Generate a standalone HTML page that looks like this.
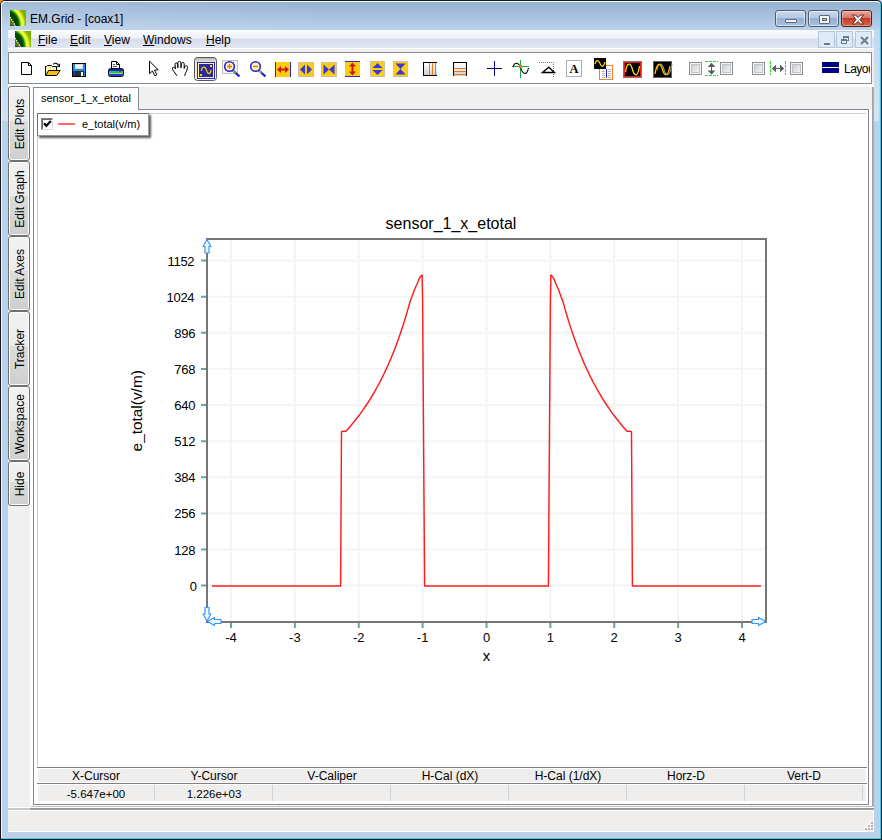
<!DOCTYPE html>
<html><head><meta charset="utf-8"><title>EM.Grid - [coax1]</title>
<style>
*{box-sizing:border-box;margin:0;padding:0}
html,body{width:882px;height:840px;overflow:hidden;background:#000}
body{font-family:"Liberation Sans",sans-serif;font-size:12px;color:#000;position:relative}
.abs{position:absolute}
#win{position:absolute;left:0;top:0;width:882px;height:840px;background:#16181c;overflow:hidden}
#frame{position:absolute;left:0;top:0;width:882px;height:840px;border-radius:5px 5px 0 0;
 background:linear-gradient(180deg,#96b2d1 2px,#a6c0dd 15px,#b9d1ea 30px,#b9d1ea 100%)}
#titlehl{position:absolute;left:2px;top:2px;width:330px;height:28px;background:linear-gradient(90deg,rgba(255,255,255,.12),rgba(255,255,255,0))}
#client{position:absolute;left:8px;top:30px;width:866px;height:802px;background:#f0f0f0}
#title{position:absolute;left:30px;top:11px;font-size:12px;line-height:16px;white-space:nowrap}
#menubar{position:absolute;left:0;top:0;width:866px;height:18px;background:linear-gradient(180deg,#fcfcfe 0,#eef0f8 8px,#d9dcee 9px,#e2e5f2 18px)}
.mi{position:absolute;top:3px;line-height:15px;font-size:12px;white-space:nowrap}
.mi u{text-decoration:underline;text-underline-offset:1px}

.cb{position:absolute;top:10px;height:17px;border:1px solid #4f5d72;border-radius:3px;background:linear-gradient(180deg,#c9d9ed 0,#b5c9e3 45%,#94afd0 50%,#a9c1de 100%);box-shadow:inset 0 0 0 1px rgba(255,255,255,.55)}
.cb i{position:absolute;display:block}
.cb.cl{border-color:#5c1a16;background:linear-gradient(180deg,#e8a89a 0,#d8776a 45%,#c13c28 50%,#d1694a 100%);box-shadow:inset 0 0 0 1px rgba(255,255,255,.35)}

.mb{position:absolute;top:1px;width:17px;height:17px;border:1px solid #b4c6dc;background:#ddeaf8}
.mb i{position:absolute;display:block}
.sb{position:absolute;left:0;width:22px;border:1px solid #707070;border-radius:3px;background:linear-gradient(180deg,#f2f2f2 0,#ebebeb 46%,#dddddd 46%,#cfcfcf 100%);box-shadow:inset 0 0 0 1px #fcfcfc}
.sb span{position:absolute;left:50%;top:50%;transform:translate(-50%,-50%) rotate(-90deg) translateY(1px);white-space:nowrap;font-size:12px;line-height:16px}

.hc{text-align:center;font-size:12px;line-height:15px;white-space:nowrap}
</style></head><body>
<svg width="0" height="0" style="position:absolute"><defs>
<linearGradient id="ag" x1="0" y1="1" x2="1" y2="0"><stop offset="0" stop-color="#0c3a08"/><stop offset=".45" stop-color="#1f6a10"/><stop offset=".6" stop-color="#f4f63c"/><stop offset=".72" stop-color="#b9dc10"/><stop offset="1" stop-color="#6aa800"/></linearGradient>
<linearGradient id="abg" x1="0" y1="0" x2="0" y2="1"><stop offset="0" stop-color="#a8a8a8"/><stop offset=".12" stop-color="#d4d4cc"/><stop offset=".3" stop-color="#eaeae2"/><stop offset="1" stop-color="#f2f2ec"/></linearGradient>
<linearGradient id="gg" x1="0" y1="0" x2="0" y2="1"><stop offset="0" stop-color="#ffffff"/><stop offset="1" stop-color="#cfcfcf"/></linearGradient>
<linearGradient id="cbg" x1="0" y1="0" x2="1" y2="1"><stop offset="0" stop-color="#c8ccd0"/><stop offset="1" stop-color="#f6f6f6"/></linearGradient>
<radialGradient id="atl" cx="0" cy="0" r="1"><stop offset="0" stop-color="#b4dc10"/><stop offset="1" stop-color="#b4dc10" stop-opacity="0"/></radialGradient>

</defs></svg>
<div id="win">
<div class="abs" style="left:0;top:0;width:5px;height:5px;background:#ff9000"></div><div class="abs" style="left:877px;top:0;width:5px;height:5px;background:#d8d8ee"></div>
<div id="frame"></div>
<div class="abs" style="left:2px;top:30px;width:6px;height:91px;background:linear-gradient(180deg,rgba(255,255,255,.12),rgba(255,255,255,.32))"></div><div class="abs" style="left:874px;top:30px;width:6px;height:91px;background:linear-gradient(180deg,rgba(255,255,255,.15),rgba(255,255,255,.42))"></div>
<div id="titlehl"></div>
<div class="abs" style="left:0;top:0;width:882px;height:840px;border-radius:5px 5px 0 0;border:1px solid #16181c;border-right-color:#0a0a0a;pointer-events:none"></div>
<div class="abs" style="left:1px;top:1px;width:879px;height:838px;border-radius:4px 4px 0 0;border-left:1px solid #f4f8fc;border-top:1px solid #f6fafd"></div>
<div class="abs" style="left:880px;top:3px;width:1px;height:836px;background:#2fd0f7"></div>
<div class="abs" style="left:1px;top:838px;width:880px;height:1px;background:#2fd0f7"></div>
<div class="abs" style="left:879px;top:30px;width:1px;height:808px;background:#c6d0e8"></div>
<div class="abs" style="left:2px;top:837px;width:878px;height:1px;background:#c6cfe7"></div>
<svg class="abs" style="left:10px;top:10px" width="16" height="16" viewBox="0 0 16 16"><rect width="16" height="16" fill="#74ae00"/><circle cx="-7" cy="15" r="25.5" fill="#84bc00"/><circle cx="-7" cy="15" r="24.2" fill="#5f9200"/><circle cx="-7" cy="15" r="23.6" fill="#8cc400"/><circle cx="-7" cy="15" r="22" fill="#b8e010"/><circle cx="-7" cy="15" r="20.900" fill="#f4fa3c"/><circle cx="-7" cy="15" r="18.6" fill="#d4ee20"/><circle cx="-7" cy="15" r="17.8" fill="#5cc418"/><circle cx="-7" cy="15" r="16.8" fill="#147414"/><circle cx="-7" cy="15" r="15.4" fill="#054608"/><path d="M0 7L5.500 16H0Z" fill="#56780e"/><path d="M0 7L5.500 16" stroke="#f4f8e0" stroke-width="1.300" stroke-dasharray="1.4 1.1"/><rect x="0" y="14.8" width="2.500" height="1.200" fill="#3c3c3c"/></svg>
<!-- caption buttons -->
<div class="cb" style="left:775px;width:31px"><i style="left:9px;top:8px;width:12px;height:4px;border:1px solid #5a6a80;background:#f4f6f9;border-radius:1px"></i></div>
<div class="cb" style="left:808px;width:31px"><i style="left:10px;top:4px;width:11px;height:9px;border:1px solid #5a6a80;background:#f4f6f9;border-radius:1px"></i><i style="left:13px;top:7px;width:5px;height:3px;border:1px solid #5a6a80;background:#a9c0dc"></i></div>
<div class="cb cl" style="left:841px;width:31px"><svg class="abs" style="left:9px;top:3px" width="14" height="11" viewBox="0 0 14 11"><path d="M1.5 1 L4.5 1 L7 3.6 L9.5 1 L12.5 1 L9 5.5 L12.5 10 L9.5 10 L7 7.4 L4.5 10 L1.5 10 L5 5.5 Z" fill="#f6f6f6" stroke="#5a2a24" stroke-width="1" stroke-linejoin="round"/></svg></div>

<div id="title">EM.Grid - [coax1]</div>
<div id="client">
<div id="menubar">
<svg class="abs" style="left:7px;top:1px" width="16" height="16" viewBox="0 0 16 16"><rect width="16" height="16" fill="#74ae00"/><circle cx="-7" cy="15" r="25.5" fill="#84bc00"/><circle cx="-7" cy="15" r="24.2" fill="#5f9200"/><circle cx="-7" cy="15" r="23.6" fill="#8cc400"/><circle cx="-7" cy="15" r="22" fill="#b8e010"/><circle cx="-7" cy="15" r="20.900" fill="#f4fa3c"/><circle cx="-7" cy="15" r="18.6" fill="#d4ee20"/><circle cx="-7" cy="15" r="17.8" fill="#5cc418"/><circle cx="-7" cy="15" r="16.8" fill="#147414"/><circle cx="-7" cy="15" r="15.4" fill="#054608"/><path d="M0 7L5.500 16H0Z" fill="#56780e"/><path d="M0 7L5.500 16" stroke="#f4f8e0" stroke-width="1.300" stroke-dasharray="1.4 1.1"/><rect x="0" y="14.8" width="2.500" height="1.200" fill="#3c3c3c"/></svg>
<span class="mi" style="left:30px"><u>F</u>ile</span>
<span class="mi" style="left:62px"><u>E</u>dit</span>
<span class="mi" style="left:96px"><u>V</u>iew</span>
<span class="mi" style="left:135px"><u>W</u>indows</span>
<span class="mi" style="left:198px"><u>H</u>elp</span>
</div>
<!-- MDI buttons (client coords: page-8, page-30) -->
<div class="mb" style="left:810px"><i style="left:5px;top:11px;width:6px;height:2px;background:#6f7a8a"></i></div>
<div class="mb" style="left:828px"><i style="left:6px;top:4px;width:6px;height:5px;border:1px solid #6f7a8a;border-top-width:2px"></i><i style="left:4px;top:7px;width:6px;height:5px;border:1px solid #6f7a8a;border-top-width:2px;background:#ddeaf8"></i></div>
<div class="mb" style="left:847px"><svg class="abs" style="left:3px;top:3px" width="11" height="11" viewBox="0 0 11 11"><path d="M2 2L9 9M9 2L2 9" stroke="#6f7a8a" stroke-width="2"/></svg></div>

<!--TB0--><div class="abs" style="left:0;top:18px;width:866px;height:1px;background:#fff"></div>
<div class="abs" style="left:0;top:22px;width:864px;height:32px;border:1px solid #868b98;background:#fff"></div>
<div class="abs" style="left:0;top:54px;width:866px;height:3px;background:#fff"></div>
<div class="abs" style="left:836px;top:31px;width:26px;height:16px;overflow:hidden;white-space:nowrap;font-size:12px;line-height:16px;letter-spacing:-0.5px">Layout</div>
<svg class="abs" style="left:-8px;top:-30px;overflow:visible" width="882" height="100" viewBox="0 0 882 100">
<!-- new -->
<path d="M21.5 62.5H28.5L31.5 65.5V74.5H21.5Z" fill="#fff" stroke="#000"/><path d="M28.5 62.5V65.5H31.5" fill="none" stroke="#000"/>
<!-- open -->
<path d="M45.500 75.500V66.500H46.500L47.500 65.500H51.500L52.500 66.500H56.500V70.500" fill="#fdf3b4" stroke="#000"/>
<path d="M45.500 75.500L48.700 70.500H60.200L56.700 75.500Z" fill="#f5c010" stroke="#000"/>
<path d="M53.300 64.300Q56 61.600 58.800 65.600" fill="none" stroke="#000" stroke-width="1.100"/><path d="M56.800 66.700L59.400 66.500L59.700 63.800" fill="none" stroke="#000" stroke-width="1.100"/>
<!-- save -->
<g shape-rendering="crispEdges"><rect x="72.5" y="63.5" width="13" height="13" fill="#1e90e6" stroke="#000"/><rect x="73" y="71" width="3" height="5" fill="#1a3a9a"/>
<rect x="75" y="64" width="8" height="5" fill="#dcdcdc"/><rect x="76" y="65" width="6" height="3" fill="#f4f4f4"/><rect x="75" y="71" width="9" height="5" fill="#2c2c2c"/><rect x="81" y="72" width="2" height="4" fill="#fff"/></g>
<!-- print -->
<path d="M111.5 68V61.5H116.5L119.5 64.5V68" fill="#fff" stroke="#000"/><path d="M116.5 61.5V64.5H119.5" fill="none" stroke="#000"/><path d="M113 64.5H115M113 66.5H117" stroke="#555" />
<rect x="108.5" y="68.5" width="15" height="8" rx="2" fill="#2848c0" stroke="#0a0a30"/>
<g shape-rendering="crispEdges"><rect x="109" y="69" width="14" height="2" fill="#1c2c88"/><rect x="109" y="71" width="14" height="2" fill="#20b4b4"/><rect x="109" y="73" width="14" height="1" fill="#a8d820"/><rect x="109" y="74" width="14" height="2" fill="#2040c8"/><rect x="119" y="71" width="2" height="1" fill="#e02020"/></g>
<!-- arrow cursor -->
<path d="M149.500 61.200V73.700L152.400 71L154.800 75.800L156.800 74.800L154.600 70.200L158.200 69.800Z" fill="#fff" stroke="#000" stroke-linejoin="miter"/>
<!-- hand -->
<path d="M176.800 75.500L172.900 70C172 68.500 172.300 67.300 173.600 67.100C174.600 67 175.300 67.800 175.400 69L175.100 64.200C175 62.600 177.300 62.300 177.500 64L177.900 67.800L177.900 62.700C177.900 60.900 180.800 60.900 180.900 62.700L181 67.800L181.300 63.700C181.400 62 184.200 62.100 184.200 63.800L184.200 68.500L184.900 66.500C185.400 65 187.800 65.500 187.500 67.200L186.900 70C186.500 71.800 185.300 73 184.700 75.500" fill="#fff" stroke="#000" stroke-width="1" stroke-linejoin="round" stroke-linecap="round"/>
<!-- active button -->
<rect x="194.500" y="57.500" width="22" height="23" rx="3" fill="url(#abg)" stroke="#585858"/>
<g shape-rendering="crispEdges"><rect x="197" y="62" width="18" height="17" fill="#2828c6"/><rect x="198.500" y="63.500" width="15" height="14" fill="#2a2a9e" stroke="#ffefb4"/>
<rect x="210" y="65" width="2" height="2" fill="#ffd400"/><rect x="200" y="74" width="2" height="2" fill="#ffd400"/></g>
<path d="M201.500 71C201.300 66.800 204.800 66 206 69C207 71.800 207.200 73.600 209 73.600C210.500 73.600 210.800 72 210.900 70" fill="none" stroke="#ffd000" stroke-width="1.200"/>
<!-- zoom in -->
<rect x="222.5" y="60.5" width="15" height="13" fill="#f4f4f4" stroke="#c4c4c4"/>
<path d="M233 70.5L239.5 76.5" stroke="#2020c8" stroke-width="2.2"/><path d="M233 70.5L235.5 72.8" stroke="#80c040" stroke-width="1.6"/>
<circle cx="229.5" cy="66.5" r="4.8" fill="#fff1c4" stroke="#2626cc" stroke-width="1.6"/>
<path d="M227 66.5H232M229.5 64V69" stroke="#f07800" stroke-width="1.3"/>
<!-- zoom out -->
<path d="M259 70.5L265.5 76.5" stroke="#2020c8" stroke-width="2.2"/><path d="M259 70.5L261.5 72.8" stroke="#80c040" stroke-width="1.6"/>
<circle cx="255.5" cy="66.5" r="4.8" fill="#fff1c4" stroke="#2626cc" stroke-width="1.6"/>
<path d="M253 66.5H258" stroke="#f07800" stroke-width="1.5"/>
<!-- yellow icons -->
<g shape-rendering="crispEdges">
<rect x="275" y="62" width="16" height="15" fill="#ffcc10"/><rect x="275" y="62" width="1" height="15" fill="#2030d0"/><rect x="290" y="62" width="1" height="15" fill="#2030d0"/>
<rect x="298.5" y="62.5" width="15" height="14" fill="#ffcc10" stroke="#c8c0a8"/>
<rect x="321.5" y="62.5" width="15" height="14" fill="#ffcc10" stroke="#c8c0a8"/>
<rect x="345" y="61" width="15" height="16" fill="#ffcc10"/><rect x="345" y="61" width="15" height="1" fill="#2030d0"/><rect x="345" y="76" width="15" height="1" fill="#2030d0"/>
<rect x="370.5" y="61.5" width="14" height="15" fill="#ffcc10" stroke="#c8c0a8"/>
<rect x="393.5" y="61.5" width="14" height="15" fill="#ffcc10" stroke="#c8c0a8"/>
</g>
<path d="M277 69.5L281 66V68.5H285V66L289 69.5L285 73V70.5H281V73Z" fill="#d01818"/>
<path d="M300 69.5L305 64.5V74.5ZM312 69.5L307 64.5V74.5Z" fill="#3838d8"/>
<path d="M323.5 64.5L329 69.5L323.5 74.5ZM334.5 64.5L329 69.5L334.5 74.5Z" fill="#3838d8"/>
<path d="M352.5 62.5L356 66.5H353.5V71.5H356L352.5 75.5L349 71.5H351.5V66.5H349Z" fill="#d01818"/>
<path d="M377.5 63L382.5 68H372.5ZM377.5 75L382.5 70H372.5Z" fill="#3838d8"/>
<path d="M395.5 63.5H405.5L400.5 69ZM395.5 74.5H405.5L400.5 69Z" fill="#3838d8"/>
<!-- vertical lines icon -->
<g shape-rendering="crispEdges"><rect x="424" y="63" width="13" height="12" fill="url(#gg)"/><path d="M437 62.5H423.5V75.5H437" fill="none" stroke="#000"/>
<path d="M429.500 63V75M432.5 63V75M435.5 63V75" stroke="#f07818"/></g>
<!-- horizontal lines icon -->
<g shape-rendering="crispEdges"><rect x="454" y="63" width="13" height="13" fill="url(#gg)"/><path d="M453.5 76V62.5H466.5V76" fill="none" stroke="#000"/>
<path d="M454 68.500H466M454 71.500H466M454 74.500H466" stroke="#f07818"/></g>
<!-- crosshair -->
<path d="M494.500 61V76M487 68.500H502" stroke="#000090" stroke-width="1" shape-rendering="crispEdges"/>
<!-- tracker -->
<path d="M520.500 60V78M512 66.500H529" stroke="#20a848" stroke-width="1" shape-rendering="crispEdges"/>
<path d="M513 67C514.500 62 518 62 520.500 67C522 73.500 526.500 77 528.500 68" fill="none" stroke="#000" stroke-width="1.1"/>
<rect x="519" y="65" width="3" height="3" fill="#f07818"/>
<!-- slope -->
<path d="M539 62.500H554M553.500 62V77" stroke="#f020f0" stroke-dasharray="1 1" shape-rendering="crispEdges"/>
<path d="M542.5 72.5L548.8 67.2L554.5 72.5Z" fill="#fff" stroke="#000" stroke-width="1.3"/>
<!-- A -->
<rect x="566.5" y="60.500" width="15" height="16" fill="#fff" stroke="#b0b0b0"/>
<text x="574" y="73" text-anchor="middle" font-family="Liberation Serif,serif" font-weight="bold" font-size="12.500">A</text>
<!-- scope + doc -->
<g shape-rendering="crispEdges"><rect x="594" y="58" width="12" height="11" fill="#000"/><rect x="594.5" y="58.500" width="11" height="10" fill="none" stroke="#505050"/>
<rect x="599.500" y="65.500" width="13" height="14" fill="#fff" stroke="#f08030"/><rect x="594" y="58" width="12" height="11" fill="#000"/>
<path d="M606.500 69V78" stroke="#2020e0"/><path d="M602 71.500H605M602 73.500H605M602 75.500H605M602 77.500H605M608 69.500H611M608 71.500H611M608 73.500H611M608 75.500H611M608 77.500H611" stroke="#b0b0b0"/></g>
<path d="M595 64C596 59.500 598.500 59.500 600 63.500C601.500 67.500 603.500 67.500 605 62" fill="none" stroke="#ffd800" stroke-width="1.2"/>
<!-- red scope -->
<g shape-rendering="crispEdges"><rect x="623.500" y="61.500" width="18" height="16" fill="#000" stroke="#8a7070"/><rect x="624.500" y="62.500" width="16" height="14" fill="none" stroke="#e81818"/></g>
<path d="M625.500 72C627 62 630.500 62 632.500 69.500C634.500 77 638 77 639.500 66" fill="none" stroke="#ffe000" stroke-width="1.3"/>
<!-- two scope -->
<rect x="653.500" y="61.500" width="18" height="16" fill="#000" stroke="#606060"/>
<path d="M655 70C656.500 62 660 62 662 69.500C664 77 668 77 670 64" fill="none" stroke="#909090" stroke-width="1.1" transform="translate(2,0)"/>
<path d="M655 74C657 62 660.500 62 662.500 69.500C664.500 77 668 77 670 66" fill="none" stroke="#ffc000" stroke-width="1.3"/>
<!-- checkboxes -->
<rect x="689.5" y="62.500" width="12" height="12" fill="#f4f4f4" stroke="#8e8f8f"/><rect x="691.5" y="64.500" width="8" height="8" fill="url(#cbg)" stroke="#c0c4c8"/>
<rect x="720.5" y="62.500" width="12" height="12" fill="#f4f4f4" stroke="#8e8f8f"/><rect x="722.5" y="64.500" width="8" height="8" fill="url(#cbg)" stroke="#c0c4c8"/>
<rect x="752.5" y="62.500" width="12" height="12" fill="#f4f4f4" stroke="#8e8f8f"/><rect x="754.5" y="64.500" width="8" height="8" fill="url(#cbg)" stroke="#c0c4c8"/>
<rect x="790.5" y="62.500" width="12" height="12" fill="#f4f4f4" stroke="#8e8f8f"/><rect x="792.5" y="64.500" width="8" height="8" fill="url(#cbg)" stroke="#c0c4c8"/>
<!-- v arrows -->
<path d="M705 61.500H718M705 75.500H718" stroke="#20e020" stroke-dasharray="3 1" shape-rendering="crispEdges"/>
<path d="M711.500 62.800L715.300 67H712V70.500H715.300L711.500 74.700L707.700 70.500H711V67H707.700Z" fill="#5c5c5c"/>
<!-- h arrows -->
<path d="M770.500 61V75M785.500 61V75" stroke="#20e020" stroke-dasharray="3 1" shape-rendering="crispEdges"/>
<path d="M771.800 68.500L776 64.700V68H780V64.700L784.200 68.500L780 72.300V69H776V72.300Z" fill="#5c5c5c"/>
<!-- layout -->
<rect x="822" y="62" width="17" height="5" fill="#000080"/><rect x="822" y="68" width="17" height="5" fill="#000080"/>
</svg>
<!--TB1-->
<!--SB0--><div class="sb" style="top:56px;height:75px"><span>Edit Plots</span></div>
<div class="sb" style="top:131px;height:75px"><span>Edit Graph</span></div>
<div class="sb" style="top:206px;height:75px"><span>Edit Axes</span></div>
<div class="sb" style="top:281px;height:75px"><span>Tracker</span></div>
<div class="sb" style="top:356px;height:75px"><span>Workspace</span></div>
<div class="sb" style="top:431px;height:45px"><span>Hide</span></div>
<!--SB1-->
<!--MDI0--><div class="abs" style="left:22px;top:57px;width:842px;height:719px;background:#fff"></div>
<div class="abs" style="left:25px;top:57px;width:839px;height:22px;background:#f0f0f0"></div>
<div class="abs" style="left:864px;top:57px;width:2px;height:723px;background:linear-gradient(90deg,#9c9c9c,#b4b4b4)"></div>
<div class="abs" style="left:23px;top:776px;width:843px;height:1px;background:#bdbdbd"></div>
<div class="abs" style="left:0px;top:777px;width:866px;height:1px;background:#fff"></div>
<div class="abs" style="left:0px;top:778px;width:22px;height:2px;background:#c8c8c8"></div>
<div class="abs" style="left:22px;top:778px;width:844px;height:2px;background:linear-gradient(180deg,#8e8e8e,#a8a8a8)"></div>
<div class="abs" style="left:25px;top:79px;width:836px;height:696px;border:1px solid #7f8496;background:#fff"></div>
<div class="abs" style="left:25px;top:57px;width:106px;height:23px;border:1px solid #868b98;border-bottom:none;background:#fff;font-size:11px;line-height:14px;padding:3px 0 0 7px;white-space:nowrap">sensor_1_x_etotal</div>
<div class="abs" style="left:29px;top:83px;width:829px;height:1px;background:#cdcdcd"></div>
<div class="abs" style="left:29px;top:83px;width:1px;height:653px;background:#cdcdcd"></div>
<div class="abs" style="left:29px;top:737px;width:830px;height:1px;background:#808080"></div>
<div class="abs" style="left:29px;top:753px;width:830px;height:1px;background:#808080"></div>
<div class="abs" style="left:30px;top:739px;width:828px;height:13px;background:#f0eeed"></div>
<div class="abs" style="left:30px;top:755px;width:828px;height:16px;background:#f0eeed"></div>
<div class="abs hc" style="left:30px;top:739px;width:116px">X-Cursor</div>
<div class="abs hc" style="left:30px;top:757px;width:116px;font-size:11.5px">-5.647e+00</div>
<div class="abs" style="left:146px;top:755px;width:1px;height:16px;background:#d2d2d2"></div>
<div class="abs hc" style="left:148px;top:739px;width:116px">Y-Cursor</div>
<div class="abs hc" style="left:148px;top:757px;width:116px;font-size:11.5px">1.226e+03</div>
<div class="abs" style="left:264px;top:755px;width:1px;height:16px;background:#d2d2d2"></div>
<div class="abs hc" style="left:266px;top:739px;width:116px">V-Caliper</div>
<div class="abs" style="left:382px;top:755px;width:1px;height:16px;background:#d2d2d2"></div>
<div class="abs hc" style="left:384px;top:739px;width:116px">H-Cal (dX)</div>
<div class="abs" style="left:500px;top:755px;width:1px;height:16px;background:#d2d2d2"></div>
<div class="abs hc" style="left:502px;top:739px;width:116px">H-Cal (1/dX)</div>
<div class="abs" style="left:618px;top:755px;width:1px;height:16px;background:#d2d2d2"></div>
<div class="abs hc" style="left:620px;top:739px;width:116px">Horz-D</div>
<div class="abs" style="left:736px;top:755px;width:1px;height:16px;background:#d2d2d2"></div>
<div class="abs hc" style="left:738px;top:739px;width:116px">Vert-D</div>
<div class="abs" style="left:854px;top:755px;width:1px;height:16px;background:#d2d2d2"></div>
<div class="abs" style="left:29px;top:83px;width:112px;height:23px;background:#fff;border:1px solid #6a6a6a;border-right-color:#9a9a9a;border-bottom-color:#9a9a9a;box-shadow:2px 2px 2px rgba(0,0,0,.65)"></div>
<div class="abs" style="left:33px;top:88px;width:12px;height:12px;background:#fff;border:1px solid #858585;border-right-color:#dcdcdc;border-bottom-color:#dcdcdc;box-shadow:inset 1px 1px 0 #6a6a6a"></div>
<svg class="abs" style="left:33px;top:88px" width="12" height="12" viewBox="0 0 12 12"><path d="M3 5.200L5.300 7.800L9.800 3" fill="none" stroke="#000" stroke-width="2.200"/></svg>
<div class="abs" style="left:50px;top:93px;width:17px;height:2px;background:#ff6a6a"></div>
<div class="abs" style="left:74px;top:87px;font-size:11px;line-height:14px;white-space:nowrap">e_total(v/m)</div>
<div class="abs" style="left:0px;top:780px;width:866px;height:1px;background:#fff"></div>
<div class="abs" style="left:0px;top:781px;width:865px;height:20px;background:#f0eeed"></div>
<div class="abs" style="left:0px;top:801px;width:866px;height:1px;background:#fff"></div>
<div class="abs" style="left:865px;top:780px;width:1px;height:22px;background:#fff"></div>
<div class="abs" style="left:862px;top:791px;width:2px;height:2px;background:#fff"></div>
<div class="abs" style="left:863px;top:792px;width:2px;height:2px;background:#b4b0ae"></div>
<div class="abs" style="left:859px;top:794px;width:2px;height:2px;background:#fff"></div>
<div class="abs" style="left:860px;top:795px;width:2px;height:2px;background:#b4b0ae"></div>
<div class="abs" style="left:862px;top:794px;width:2px;height:2px;background:#fff"></div>
<div class="abs" style="left:863px;top:795px;width:2px;height:2px;background:#b4b0ae"></div>
<div class="abs" style="left:856px;top:797px;width:2px;height:2px;background:#fff"></div>
<div class="abs" style="left:857px;top:798px;width:2px;height:2px;background:#b4b0ae"></div>
<div class="abs" style="left:859px;top:797px;width:2px;height:2px;background:#fff"></div>
<div class="abs" style="left:860px;top:798px;width:2px;height:2px;background:#b4b0ae"></div>
<div class="abs" style="left:862px;top:797px;width:2px;height:2px;background:#fff"></div>
<div class="abs" style="left:863px;top:798px;width:2px;height:2px;background:#b4b0ae"></div><!--MDI1-->
<!--PLOT0--><svg class="abs" style="left:-8px;top:-30px" width="882" height="840" viewBox="0 0 882 840" font-family="Liberation Sans,sans-serif">
<path d="M231.00 240V621M294.88 240V621M358.75 240V621M422.62 240V621M486.50 240V621M550.38 240V621M614.25 240V621M678.12 240V621M742.00 240V621M208 585.60H765M208 549.49H765M208 513.38H765M208 477.27H765M208 441.16H765M208 405.04H765M208 368.93H765M208 332.82H765M208 296.71H765M208 260.60H765" stroke="#ebebeb" stroke-width="2" stroke-dasharray="1 1" fill="none"/>
<path d="M231.00 623V628M294.88 623V628M358.75 623V628M422.62 623V628M486.50 623V628M550.38 623V628M614.25 623V628M678.12 623V628M742.00 623V628M201 585.60H206M201 549.49H206M201 513.38H206M201 477.27H206M201 441.16H206M201 405.04H206M201 368.93H206M201 332.82H206M201 296.71H206M201 260.60H206" stroke="#5ea8a8" stroke-width="2" fill="none"/>
<rect x="207" y="239" width="559" height="383" fill="none" stroke="#757575" stroke-width="2" shape-rendering="crispEdges"/>
<polyline points="212.0,586.0 340.6,586.0 341.5,431.7 343.5,431.3 346.0,431.2 348.0,429.0 350.0,426.7 352.0,424.3 354.0,421.8 356.0,419.3 358.0,416.7 360.0,414.1 362.0,411.3 364.0,408.4 366.0,405.5 368.0,402.5 370.0,399.3 372.0,396.0 374.0,392.7 376.0,389.2 378.0,385.5 380.0,381.8 382.0,377.9 384.0,373.8 386.0,369.6 388.0,365.2 390.0,360.6 392.0,355.8 394.0,350.9 396.0,345.7 398.0,340.2 400.0,334.6 402.0,328.6 404.0,322.4 406.0,315.8 408.0,308.9 410.0,301.7 411.8,297.1 414.6,289.2 417.1,284.0 418.8,279.6 420.4,276.6 422.1,275.0 422.6,300.0 424.6,586.0 548.4,586.0 550.4,300.0 550.9,275.0 552.6,276.6 554.2,279.6 555.9,284.0 558.4,289.2 561.2,297.1 563.0,301.7 565.0,308.9 567.0,315.8 569.0,322.4 571.0,328.6 573.0,334.6 575.0,340.2 577.0,345.7 579.0,350.9 581.0,355.8 583.0,360.6 585.0,365.2 587.0,369.6 589.0,373.8 591.0,377.9 593.0,381.8 595.0,385.5 597.0,389.2 599.0,392.7 601.0,396.0 603.0,399.3 605.0,402.5 607.0,405.5 609.0,408.4 611.0,411.3 613.0,414.1 615.0,416.7 617.0,419.3 619.0,421.8 621.0,424.3 623.0,426.7 625.0,429.0 627.0,431.2 629.5,431.3 631.5,431.7 632.4,586.0 761.0,586.0" fill="none" stroke="#ff1c1c" stroke-width="1.45" stroke-linejoin="round"/>
<g fill="#f4f4f4" stroke="#3399ff" stroke-width="1.2" stroke-linejoin="round">
<path d="M207 239.500L211 246.500H209V253H205V246.500H203Z"/>
<path d="M207 621L211 614H209V607.500H205V614H203Z"/>
<path d="M207.500 621.500L214.500 617.500V619.500H221V623.500H214.500V625.500Z"/>
<path d="M765.500 621.500L758.500 617.500V619.500H752V623.500H758.500V625.500Z"/>
</g>
<text x="196.7" y="590.6" text-anchor="end" font-size="13" letter-spacing="-0.3">0</text>
<text x="195.1" y="554.5" text-anchor="end" font-size="13" letter-spacing="-0.3">128</text>
<text x="195.1" y="518.4" text-anchor="end" font-size="13" letter-spacing="-0.3">256</text>
<text x="195.1" y="482.3" text-anchor="end" font-size="13" letter-spacing="-0.3">384</text>
<text x="195.1" y="446.2" text-anchor="end" font-size="13" letter-spacing="-0.3">512</text>
<text x="195.1" y="410.0" text-anchor="end" font-size="13" letter-spacing="-0.3">640</text>
<text x="195.1" y="373.9" text-anchor="end" font-size="13" letter-spacing="-0.3">768</text>
<text x="195.1" y="337.8" text-anchor="end" font-size="13" letter-spacing="-0.3">896</text>
<text x="194.3" y="301.7" text-anchor="end" font-size="13" letter-spacing="-0.3">1024</text>
<text x="194.3" y="265.6" text-anchor="end" font-size="13" letter-spacing="-0.3">1152</text>
<text x="231.0" y="641.5" text-anchor="middle" font-size="13">-4</text>
<text x="294.9" y="641.5" text-anchor="middle" font-size="13">-3</text>
<text x="358.8" y="641.5" text-anchor="middle" font-size="13">-2</text>
<text x="422.6" y="641.5" text-anchor="middle" font-size="13">-1</text>
<text x="486.5" y="641.5" text-anchor="middle" font-size="13">0</text>
<text x="550.4" y="641.5" text-anchor="middle" font-size="13">1</text>
<text x="614.2" y="641.5" text-anchor="middle" font-size="13">2</text>
<text x="678.1" y="641.5" text-anchor="middle" font-size="13">3</text>
<text x="742.0" y="641.5" text-anchor="middle" font-size="13">4</text>
<text x="451" y="229" text-anchor="middle" font-size="16">sensor_1_x_etotal</text>
<text x="486.5" y="660.500" text-anchor="middle" font-size="15">x</text>
<text transform="translate(142,410.800) rotate(-90)" text-anchor="middle" font-size="15.400">e_total(v/m)</text>
</svg><!--PLOT1-->
<!--STATUS-->
</div>
</div>
</body></html>
